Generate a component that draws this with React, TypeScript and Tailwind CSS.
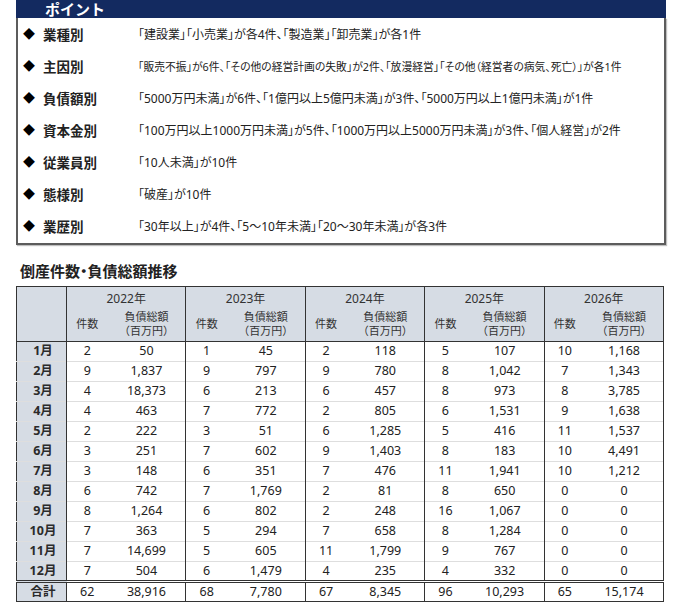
import React from 'react';

const points: { label: string; text: string; size: string }[] = [
    { label: '業種別', text: '「建設業」「小売業」が各4件、「製造業」「卸売業」が各1件', size: 'text-[12px]' },
    {
        label: '主因別',
        text: '「販売不振」が6件、「その他の経営計画の失敗」が2件、「放漫経営」「その他（経営者の病気、死亡）」が各1件',
        size: 'text-[10.8px]',
    },
    { label: '負債額別', text: '「5000万円未満」が6件、「1億円以上5億円未満」が3件、「5000万円以上1億円未満」が1件', size: 'text-[12px]' },
    {
        label: '資本金別',
        text: '「100万円以上1000万円未満」が5件、「1000万円以上5000万円未満」が3件、「個人経営」が2件',
        size: 'text-[12px]',
    },
    { label: '従業員別', text: '「10人未満」が10件', size: 'text-[12px]' },
    { label: '態様別', text: '「破産」が10件', size: 'text-[12px]' },
    { label: '業歴別', text: '「30年以上」が4件、「5～10年未満」「20～30年未満」が各3件', size: 'text-[12px]' },
];

const years = ['2022年', '2023年', '2024年', '2025年', '2026年'];

// [month, then count/amount pairs per year]
const rows: string[][] = [
    ['1月', '2', '50', '1', '45', '2', '118', '5', '107', '10', '1,168'],
    ['2月', '9', '1,837', '9', '797', '9', '780', '8', '1,042', '7', '1,343'],
    ['3月', '4', '18,373', '6', '213', '6', '457', '8', '973', '8', '3,785'],
    ['4月', '4', '463', '7', '772', '2', '805', '6', '1,531', '9', '1,638'],
    ['5月', '2', '222', '3', '51', '6', '1,285', '5', '416', '11', '1,537'],
    ['6月', '3', '251', '7', '602', '9', '1,403', '8', '183', '10', '4,491'],
    ['7月', '3', '148', '6', '351', '7', '476', '11', '1,941', '10', '1,212'],
    ['8月', '6', '742', '7', '1,769', '2', '81', '8', '650', '0', '0'],
    ['9月', '8', '1,264', '6', '802', '2', '248', '16', '1,067', '0', '0'],
    ['10月', '7', '363', '5', '294', '7', '658', '8', '1,284', '0', '0'],
    ['11月', '7', '14,699', '5', '605', '11', '1,799', '9', '767', '0', '0'],
    ['12月', '7', '504', '6', '1,479', '4', '235', '4', '332', '0', '0'],
];

const total = ['合計', '62', '38,916', '68', '7,780', '67', '8,345', '96', '10,293', '65', '15,174'];

const App: React.FC = () => {
    return (
        <div className="min-h-[609px] w-[680px] bg-white pl-4 font-['Noto_Sans','Noto_Sans_CJK_JP',sans-serif] text-[#222]">
            {/* ポイント box */}
            <section className="w-[650px]">
                <div className="flex h-[18px] items-center bg-[#132a60] pl-[29px]">
                    <h2 className="text-[15px] font-bold leading-none text-white">ポイント</h2>
                </div>
                <ul className="border-2 border-t-0 border-[#5c5c5c] pl-[5px] pt-[1px] shadow-[1px_1px_1px_rgba(0,0,0,0.25)]">
                    {points.map((point) => (
                        <li key={point.label} className="flex h-8 items-center">
                            <span className="w-[20px] text-[12px] leading-none text-black">◆</span>
                            <span className="w-[95px] text-[13.5px] font-bold text-[#222]">{point.label}</span>
                            <span className={`${point.size} text-[#222] [font-feature-settings:'palt']`}>{point.text}</span>
                        </li>
                    ))}
                </ul>
            </section>

            {/* 倒産件数・負債総額推移 */}
            <h2 className="mt-[16px] mb-[5px] pl-1 text-[15px] font-bold leading-5 text-[#222] [font-feature-settings:'palt']">
                倒産件数・負債総額推移
            </h2>
            <table className="w-[648px] table-fixed border-collapse border-[1.5px] border-[#333] text-center">
                <colgroup>
                    <col className="w-[50px]" />
                    {years.map((year) => (
                        <React.Fragment key={year}>
                            <col className="w-[41px]" />
                            <col />
                        </React.Fragment>
                    ))}
                </colgroup>
                <thead className="bg-[#d6dce4] text-[#333]">
                    <tr className="h-[18px]">
                        <th rowSpan={2} className="border-r border-b border-[#333]" />
                        {years.map((year) => (
                            <th key={year} colSpan={2} className="border-r border-[#333] pt-[4px] text-[12px] font-normal leading-4">
                                {year}
                            </th>
                        ))}
                    </tr>
                    <tr className="h-[34px] border-b-[1.5px] border-[#333]">
                        {years.map((year) => (
                            <React.Fragment key={year}>
                                <th className="text-[11px] font-normal">件数</th>
                                <th className="border-r border-[#333] text-[11px] font-normal leading-[14px]">
                                    負債総額
                                    <br />
                                    （百万円）
                                </th>
                            </React.Fragment>
                        ))}
                    </tr>
                </thead>
                <tbody className="text-[12.5px]">
                    {rows.map((row) => (
                        <tr key={row[0]} className="h-[20px] border-b border-[#dedede]">
                            <td className="border-r border-[#333] bg-[#d6dce4] pl-[3px] font-bold leading-4 text-[#2b2b2b]">{row[0]}</td>
                            {row.slice(1).map((cell, index) => (
                                <td
                                    key={index}
                                    className={index % 2 === 1 ? 'border-r border-[#333] leading-4' : 'leading-4'}
                                >
                                    {cell}
                                </td>
                            ))}
                        </tr>
                    ))}
                    <tr className="h-[20px] border-t-[3px] border-double border-[#333]">
                        <td className="border-r border-[#333] bg-[#d6dce4] pl-[3px] font-bold leading-4 text-[#2b2b2b]">{total[0]}</td>
                        {total.slice(1).map((cell, index) => (
                            <td key={index} className={index % 2 === 1 ? 'border-r border-[#333] leading-4' : 'leading-4'}>
                                {cell}
                            </td>
                        ))}
                    </tr>
                </tbody>
            </table>
        </div>
    );
};

export default App;
